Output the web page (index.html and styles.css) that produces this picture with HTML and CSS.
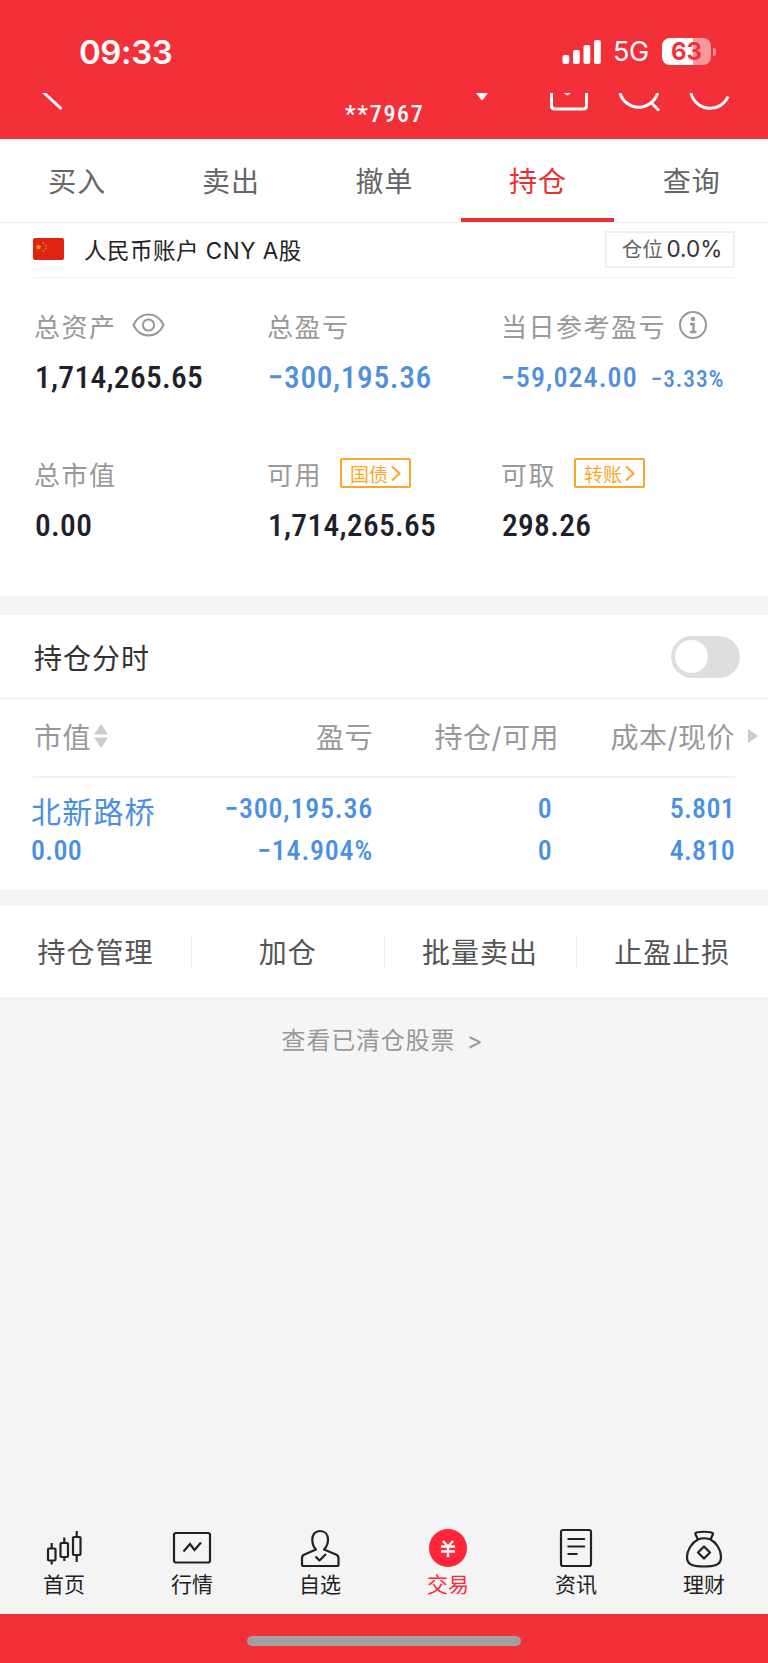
FILE: index.html
```html
<!DOCTYPE html>
<html lang="zh-CN">
<head>
    <meta charset="UTF-8">
    <meta name="viewport" content="width=device-width, initial-scale=1.0">
    <title>持仓</title>
    <link rel="stylesheet" href="styles.css">
</head>
<body>
    <header class="header">
        <div class="status-bar">
            <span class="time">09:33</span>
            <div class="status-right">
                <svg class="signal" width="40" height="26" viewBox="0 0 40 26" fill="#fff">
                    <rect x="0.5" y="16" width="6.8" height="9" rx="2"/>
                    <rect x="11" y="11" width="6.8" height="14" rx="2"/>
                    <rect x="21.5" y="6" width="6.8" height="19" rx="2"/>
                    <rect x="32" y="1" width="6.8" height="24" rx="2"/>
                </svg>
                <span class="network">5G</span>
                <div class="battery">63</div>
                <i class="battery-cap"></i>
            </div>
        </div>
        <div class="nav-bar">
            <svg class="nav-back" width="24" height="18" viewBox="0 0 24 18">
                <path d="M0 -2L19.5 16" fill="none" stroke="#fff" stroke-width="3"/>
            </svg>
            <span class="account-no">**7967</span>
            <svg class="nav-arrow" width="12" height="8" viewBox="0 0 12 8">
                <path d="M0 0H12L7 6.5Q6 7.5 5 6.5Z" fill="#fff"/>
            </svg>
            <svg class="nav-icons" width="182" height="20" viewBox="0 0 182 20" fill="none" stroke="#fff" stroke-width="3">
                <path d="M2.5 0V12.5Q2.5 16 6 16H34Q37.5 16 37.5 12.5V0"/>
                <path d="M14.5 0H22L18.5 2.5Z" fill="#fff" stroke="none"/>
                <path d="M71 0A19.5 19.5 0 0 0 108.5 0M102 9.5L110 17.5"/>
                <path d="M142 0A19.5 19.5 0 0 0 179 3.5"/>
            </svg>
        </div>
    </header>

    <nav class="tabs">
        <a class="tab">买入</a>
        <a class="tab">卖出</a>
        <a class="tab">撤单</a>
        <a class="tab active">持仓</a>
        <a class="tab">查询</a>
    </nav>

    <section class="assets">
        <div class="account">
            <svg class="flag" width="31" height="22" viewBox="0 0 31 22">
                <rect width="31" height="22" rx="2" fill="#de2310"/>
                <path d="M5.5 6L6.4 8.1L8.6 8.2L6.9 9.6L7.5 11.8L5.5 10.6L3.5 11.8L4.1 9.6L2.4 8.2L4.6 8.1Z" fill="#fbb90f"/>
                <g fill="#f0701c">
                    <circle cx="10.5" cy="5" r="0.9"/>
                    <circle cx="12.8" cy="7.5" r="0.9"/>
                    <circle cx="12.8" cy="10.5" r="0.9"/>
                    <circle cx="10.5" cy="13" r="0.9"/>
                </g>
            </svg>
            <span class="account-name">人民币账户 CNY A股</span>
            <span class="position">仓位 <b>0.0%</b></span>
        </div>

        <div class="stats">
            <div class="stat">
                <div class="label">总资产
                    <svg class="eye" width="33" height="24" viewBox="0 0 33 24" fill="none" stroke="#999" stroke-width="2">
                        <path d="M1.5 12C8 -2 25 -2 31.5 12C25 26 8 26 1.5 12Z"/>
                        <circle cx="16.5" cy="12" r="5.6"/>
                    </svg>
                </div>
                <div class="value">1,714,265.65</div>
            </div>
            <div class="stat">
                <div class="label">总盈亏</div>
                <div class="value blue">−300,195.36</div>
            </div>
            <div class="stat">
                <div class="label">当日参考盈亏
                    <svg class="info" width="30" height="30" viewBox="0 0 30 30" fill="none" stroke="#999" stroke-width="2">
                        <circle cx="15" cy="15" r="13"/>
                        <circle cx="15" cy="9" r="2.3" fill="#999" stroke="none"/>
                        <path d="M12 14H15.5V22M12 22H18.5" stroke-width="2.4"/>
                    </svg>
                </div>
                <div class="value blue small">−59,024.00<span class="percent">−3.33%</span></div>
            </div>
            <div class="stat">
                <div class="label">总市值</div>
                <div class="value">0.00</div>
            </div>
            <div class="stat">
                <div class="label">可用
                    <span class="tag">国债<svg width="10" height="17" viewBox="0 0 10 17"><path d="M1 1.5L8.5 8.5L1 15.5" fill="none" stroke="#f9a72b" stroke-width="2"/></svg></span>
                </div>
                <div class="value">1,714,265.65</div>
            </div>
            <div class="stat">
                <div class="label">可取
                    <span class="tag">转账<svg width="10" height="17" viewBox="0 0 10 17"><path d="M1 1.5L8.5 8.5L1 15.5" fill="none" stroke="#f9a72b" stroke-width="2"/></svg></span>
                </div>
                <div class="value">298.26</div>
            </div>
        </div>
    </section>

    <section class="holdings">
        <div class="chart-row">
            <span>持仓分时</span>
            <div class="switch"></div>
        </div>
        <div class="table-head">
            <span class="sortable">市值
                <svg width="14" height="24" viewBox="0 0 14 24" fill="#ccc">
                    <path d="M0 10.5L7 0L14 10.5ZM0 13.5H14L7 24Z"/>
                </svg>
            </span>
            <span>盈亏</span>
            <span>持仓/可用</span>
            <span>成本/现价</span>
            <svg class="more" width="10" height="14" viewBox="0 0 10 14"><path d="M0 0L10 7L0 14Z" fill="#ccc"/></svg>
        </div>
        <div class="stock">
            <div class="cell name"><strong>北新路桥</strong><span>0.00</span></div>
            <div class="cell profit"><span>−300,195.36</span><span>−14.904%</span></div>
            <div class="cell amount"><span>0</span><span>0</span></div>
            <div class="cell"><span>5.801</span><span>4.810</span></div>
        </div>
    </section>

    <div class="actions">
        <a>持仓管理</a>
        <a>加仓</a>
        <a>批量卖出</a>
        <a>止盈止损</a>
    </div>

    <main class="cleared">
        <a>查看已清仓股票 <span>&gt;</span></a>
    </main>

    <footer class="tab-bar">
        <a class="item">
            <svg width="40" height="40" viewBox="0 0 40 40" fill="none" stroke="#222" stroke-width="2.2">
                <rect x="4" y="20.5" width="7.5" height="12" rx="1"/>
                <path d="M7.7 15V20.5M7.7 32.5V36.5"/>
                <rect x="16.5" y="15" width="7.5" height="14" rx="1"/>
                <path d="M20.3 9.5V15M20.3 29V33"/>
                <rect x="29" y="9" width="7.5" height="18" rx="1"/>
                <path d="M32.7 3V9M32.7 27V34"/>
            </svg>
            <span>首页</span>
        </a>
        <a class="item">
            <svg width="40" height="40" viewBox="0 0 40 40" fill="none" stroke="#222" stroke-width="2.2">
                <rect x="2" y="5" width="36" height="29.5" rx="2"/>
                <path d="M11.5 23.5L18 16L22.5 22L29 14.5"/>
            </svg>
            <span>行情</span>
        </a>
        <a class="item">
            <svg width="40" height="40" viewBox="0 0 40 40" fill="none" stroke="#222" stroke-width="2.2" stroke-linejoin="round">
                <path d="M16 21.5C13 18.5 12.3 15 12.3 11.5C12.3 6 15.5 3 20 3C24.5 3 28 6 28 11.5C28 15 27 18.5 24 21.5L36 26.5Q38.5 27.5 38.5 30V36.5Q38.5 38 37 38H3.5Q2 38 2 36.5V30Q2 27.5 4.5 26.5Z"/>
                <path d="M15.5 28.5L19.5 32.5L26 26"/>
            </svg>
            <span>自选</span>
        </a>
        <a class="item active">
            <svg width="40" height="40" viewBox="0 0 40 40">
                <circle cx="20" cy="20" r="19" fill="#fe2638"/>
                <path d="M15 13L20 18.5L25 13M20 18V29M13 18.5H27M13 23.5H27" fill="none" stroke="#fff" stroke-width="2.4"/>
            </svg>
            <span>交易</span>
        </a>
        <a class="item">
            <svg width="40" height="40" viewBox="0 0 40 40" fill="none" stroke="#222" stroke-width="2.2">
                <rect x="5" y="2" width="30" height="36" rx="2"/>
                <path d="M11.5 11H29M11.5 18.5H29M11.5 26H21.5"/>
            </svg>
            <span>资讯</span>
        </a>
        <a class="item">
            <svg width="40" height="40" viewBox="0 0 40 40" fill="none" stroke="#222" stroke-width="2.2" stroke-linejoin="round">
                <path d="M14 11.5L11.5 6.5Q11 5 12.5 4.5Q20 3 27.5 4.5Q29.5 5 28.8 6.5L26.5 11.5"/>
                <path d="M14 11.5Q20 9 26.5 11.5C32.5 14.5 37 22 37 29C37 36 33 38.5 20 38.5C7 38.5 3 36 3 29C3 22 8 14.5 14 11.5Z"/>
                <path d="M20 18.5L26 24.5L20 30.5L14 24.5Z"/>
            </svg>
            <span>理财</span>
        </a>
    </footer>
    <div class="home-area"><div class="home-indicator"></div></div>
</body>
</html>
```
FILE: styles.css
```css
* {
    box-sizing: border-box;
}

body {
    margin: 0;
    height: 1663px;
    display: flex;
    flex-direction: column;
    background: #f5f5f5;
    font-family: Inter, "Noto Sans CJK SC", sans-serif;
    font-weight: 400;
    color: #333;
    white-space: nowrap;
}

svg {
    display: block;
    flex: none;
}

/* 顶部 */
.header {
    height: 139px;
    background: #f33038;
    color: #fff;
}

.status-bar {
    height: 93px;
    padding: 10px 52px 0 79px;
    display: flex;
    align-items: center;
    justify-content: space-between;
}

.time {
    font-size: 33px;
    font-weight: 600;
    letter-spacing: -0.4px;
}

.status-right {
    display: flex;
    align-items: center;
}

.network {
    margin-left: 11px;
    width: 38px;
    font-size: 27px;
    font-weight: 400;
    letter-spacing: -0.5px;
}

.battery {
    margin-left: 11px;
    width: 49px;
    height: 27px;
    border-radius: 8px;
    background: linear-gradient(90deg, #fff 63%, rgba(255, 255, 255, 0.5) 63%);
    color: #f33038;
    font-size: 24px;
    font-weight: 700;
    line-height: 27px;
    text-align: center;
}

.battery-cap {
    width: 3px;
    height: 8px;
    margin-left: 2px;
    border-radius: 0 4px 4px 0;
    background: rgba(255, 255, 255, 0.5);
}

.nav-bar {
    display: flex;
    align-items: flex-start;
    padding-left: 42px;
}

.account-no {
    margin: 7px 0 0 279px;
    width: 80px;
    font-family: Roboto, sans-serif;
    font-size: 24px;
    font-weight: 500;
    font-stretch: 87%;
    line-height: 28px;
    letter-spacing: 1.7px;
}

.nav-arrow {
    margin-left: 51px;
}

.nav-icons {
    margin-left: 61px;
}

/* 交易菜单 */
.tabs {
    display: flex;
    height: 84px;
    background: #fff;
    border-bottom: 1px solid #eee;
}

.tab {
    flex: 1;
    border-bottom: 4px solid transparent;
    padding-left: 1px;
    font-size: 28px;
    line-height: 87px;
    height: 83px;
    letter-spacing: 1px;
    text-align: center;
    color: #666;
}

.tab.active {
    color: #e93030;
    border-bottom-color: #e93030;
}

/* 资产 */
.assets {
    height: 373px;
    padding: 0 33px;
    background: #fff;
}

.account {
    height: 55px;
    display: flex;
    align-items: center;
    padding-bottom: 2px;
    border-bottom: 1px solid #f0f0f0;
}

.account-name {
    margin-left: 20px;
    font-size: 22.5px;
    letter-spacing: 0.5px;
    color: #222;
}

.position {
    margin-left: auto;
    width: 130px;
    height: 37px;
    padding-left: 4px;
    border: 2px solid #eee;
    font-size: 20.5px;
    line-height: 32px;
    text-align: center;
    color: #666;
}

.position b {
    font-size: 22.5px;
    font-weight: 400;
    color: #333;
    margin-left: -2px;
}

.stats {
    display: grid;
    grid-template-columns: 233px 234px 1fr;
    grid-template-rows: 148px 148px;
    padding: 27px 0 0 1px;
}

.label {
    display: flex;
    align-items: center;
    height: 40px;
    font-size: 26px;
    letter-spacing: 1.5px;
    color: #999;
}

.eye {
    margin-left: 15px;
}

.info {
    margin-left: 12px;
}

.value {
    padding-left: 1px;
    font-family: Roboto, sans-serif;
    font-size: 31.5px;
    font-weight: 500;
    font-stretch: 85%;
    line-height: 40px;
    margin-top: 13px;
    letter-spacing: 0.3px;
    color: #1d2129;
}

.value.blue {
    color: #4f8fdc;
    letter-spacing: 0.6px;
}

.value.small {
    padding-left: 0;
    font-size: 28px;
    letter-spacing: 1.1px;
}

.percent {
    margin-left: 13px;
    font-size: 23.5px;
    letter-spacing: 0.9px;
}

.tag {
    display: flex;
    align-items: center;
    justify-content: center;
    gap: 3px;
    width: 71px;
    height: 30px;
    margin-left: 18px;
    border: 2px solid #f9a72b;
    border-radius: 2px;
    color: #f9a72b;
    font-size: 19px;
    letter-spacing: 0;
}

/* 持仓列表 */
.holdings {
    margin-top: 19px;
    height: 275px;
    background: #fff;
}

.chart-row {
    display: flex;
    align-items: center;
    justify-content: space-between;
    height: 84px;
    padding: 0 28px 0 34px;
    border-bottom: 1px solid #eee;
    font-size: 28px;
    letter-spacing: 1px;
}

.switch {
    width: 69px;
    height: 42px;
    padding: 4px;
    border-radius: 21px;
    background: #dedede;
}

.switch::before {
    content: "";
    display: block;
    width: 33px;
    height: 33px;
    border-radius: 50%;
    background: #fff;
}

.table-head,
.stock {
    display: grid;
    grid-template-columns: 150px 190px 186px 176px;
    margin: 0 33px;
    text-align: right;
}

.table-head {
    position: relative;
    height: 79px;
    align-items: center;
    padding-bottom: 3px;
    border-bottom: 2px solid #f2f2f2;
    font-size: 28px;
    letter-spacing: 0.5px;
    color: #999;
}

.sortable {
    display: flex;
    align-items: center;
    gap: 3px;
    padding-left: 1px;
}

.more {
    position: absolute;
    right: -23px;
    top: 30px;
}

.stock {
    padding-top: 10px;
    color: #4a90e2;
}

.cell {
    display: flex;
    flex-direction: column;
    font-family: Roboto, "Noto Sans CJK SC", sans-serif;
    font-size: 28px;
    font-weight: 500;
    font-stretch: 85%;
    line-height: 42px;
    letter-spacing: 0.3px;
}

.cell.name {
    text-align: left;
    margin-left: -2px;
}

.cell.name strong {
    height: 42px;
    font-size: 30px;
    font-weight: 400;
    line-height: 50px;
    letter-spacing: 1.2px;
}

.cell.profit {
    letter-spacing: 0.8px;
}

.cell.amount {
    padding-right: 7px;
}

/* 操作 */
.actions {
    display: flex;
    align-items: center;
    margin-top: 16px;
    height: 91px;
    background: #fff;
}

.actions a {
    flex: 1;
    height: 35px;
    font-size: 28px;
    line-height: 39px;
    letter-spacing: 1px;
    text-align: center;
    color: #555;
}

.actions a + a {
    border-left: 1px solid #f2f2f2;
}

.cleared {
    flex: 1;
    padding-top: 26px;
    font-size: 24px;
    line-height: 36px;
    letter-spacing: 0.8px;
    text-align: center;
    color: #999;
}

.cleared a {
    margin-right: 3px;
}

.cleared span {
    margin-left: 4px;
}

/* 底部导航 */
.tab-bar {
    display: flex;
    height: 99px;
    padding-top: 13px;
    background: #f4f4f4;
}

.item {
    flex: 1;
    display: flex;
    flex-direction: column;
    align-items: center;
    font-size: 21px;
    line-height: 34px;
    color: #222;
}

.item.active {
    color: #fe2638;
}

.home-area {
    height: 49px;
    padding-top: 22px;
    background: #f33038;
}

.home-indicator {
    width: 274px;
    height: 10px;
    margin: 0 auto;
    border-radius: 5px;
    background: #a0a0a0;
}
```
